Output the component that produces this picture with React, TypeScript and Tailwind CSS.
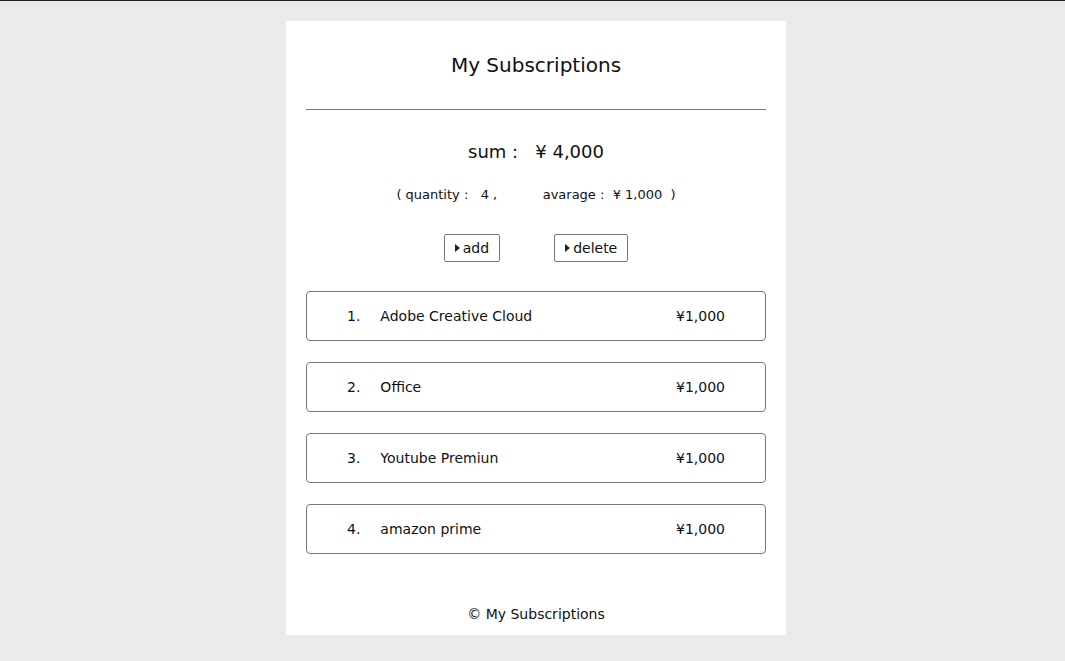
export default function App() {
  const items = [
    { no: '1.', name: 'Adobe Creative Cloud', price: '¥1,000' },
    { no: '2.', name: 'Office', price: '¥1,000' },
    { no: '3.', name: 'Youtube Premiun', price: '¥1,000' },
    { no: '4.', name: 'amazon prime', price: '¥1,000' },
  ];

  const Caret = () => (
    <svg width="5" height="8" viewBox="0 0 5 8" className="inline-block mr-[3px] mb-[1px]">
      <path d="M0 0 L5 4 L0 8 Z" fill="#222" />
    </svg>
  );

  return (
    <div
      className="min-h-[661px] bg-[#ebebeb] border-t border-[#222] text-[#111] pl-[7px]"
      style={{ fontFamily: '"DejaVu Sans", "Open Sans", sans-serif' }}
    >
      <div className="w-[500px] mx-auto mt-5 bg-white px-5 pb-[11px]">
        <h1 className="pt-[30px] text-center text-[20px] leading-[28px]">My Subscriptions</h1>
        <div className="mt-[30px] border-t border-[#777]" />

        <div className="mt-[30px] text-center text-[18px] leading-[24px]">
          sum :&nbsp;&nbsp; ¥ 4,000
        </div>
        <div className="mt-[22px] text-center text-[13px] leading-[18px]">
          ( quantity :&nbsp;&nbsp;&nbsp;4 ,&nbsp;&nbsp;&nbsp;&nbsp;&nbsp;&nbsp;&nbsp;&nbsp;&nbsp;&nbsp;&nbsp;avarage :&nbsp;&nbsp;¥&nbsp;1,000&nbsp;&nbsp;)
        </div>

        <div className="mt-[30px] flex justify-center gap-[54px]">
          <button className="h-[28px] px-[10px] border border-[#777] rounded-[2px] text-[14px] flex items-center">
            <Caret />add
          </button>
          <button className="h-[28px] px-[10px] border border-[#777] rounded-[2px] text-[14px] flex items-center">
            <Caret />delete
          </button>
        </div>

        <ul className="mt-[29px] flex flex-col gap-[21px]">
          {items.map(it => (
            <li
              key={it.no}
              className="h-[50px] border border-[#777] rounded-[4px] flex items-center pl-10 pr-10 text-[14px]"
            >
              <span className="mr-[20px]">{it.no}</span>
              <span className="flex-1">{it.name}</span>
              <span>{it.price}</span>
            </li>
          ))}
        </ul>

        <footer className="mt-[51px] text-center text-[14px] leading-[18px] pb-[1px]">© My Subscriptions</footer>
      </div>
    </div>
  );
}
